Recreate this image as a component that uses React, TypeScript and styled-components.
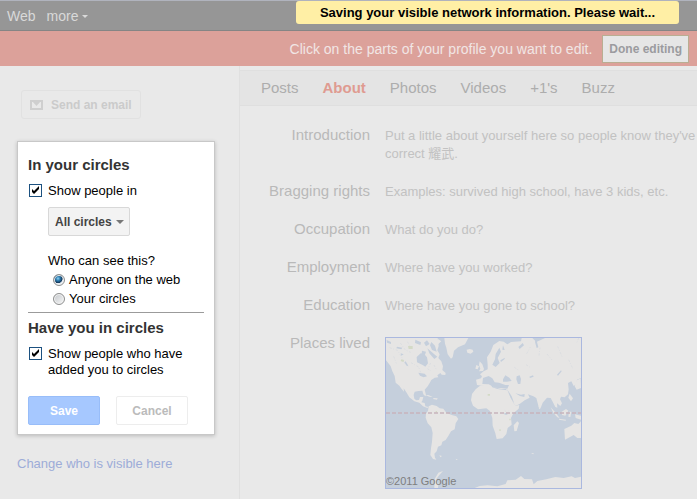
import React, { useState } from "react";
import styled, { createGlobalStyle } from "styled-components";

const GlobalStyle = createGlobalStyle`
  * { box-sizing: border-box; }
  body {
    margin: 0;
    background: #e9e9e9;
    color: #000;
    font: 13px/16px "Liberation Sans", Arial, "Noto Sans CJK SC", sans-serif;
    overflow: hidden;
  }
  button, input, select { font: inherit; margin: 0; }
  a { text-decoration: none; }
`;

const Page = styled.div`
  display: flex;
  flex-direction: column;
  min-height: 100vh;
`;

const TopBar = styled.nav`
  display: flex;
  align-items: center;
  gap: 11px;
  height: 31px;
  padding: 1px 7px 0;
  background: #969696;
  border-top: 1px solid #b0b3bd;
  border-bottom: 1px solid #858585;
`;

const TopLink = styled.a`
  display: flex;
  align-items: center;
  gap: 4px;
  color: #d9d9d9;
  font-size: 14px;
`;

const Toast = styled.div`
  position: absolute;
  top: 1px;
  right: 18px;
  width: 383px;
  padding: 4px 0 3px;
  border-radius: 3px;
  background: #ffefa5;
  font-weight: bold;
  text-align: center;
  white-space: nowrap;
`;

const EditBar = styled.div`
  display: flex;
  align-items: center;
  justify-content: flex-end;
  gap: 10px;
  height: 35px;
  padding-right: 8px;
  background: #dca19a;
  color: #f1e6e5;
  font-size: 14px;
  white-space: nowrap;
`;

const DoneButton = styled.button`
  height: 28px;
  padding: 0 6px;
  border: 1px solid #b9ae92;
  background: #e6e6e6;
  color: #9b9b9f;
  font-size: 12px;
  font-weight: bold;
`;

const Columns = styled.div`
  display: flex;
  flex: 1;
`;

const Sidebar = styled.aside`
  flex: 0 0 240px;
  padding: 24px 24px 0 17px;
  border-right: 1px solid #e0e0e0;
`;

const EmailButton = styled.button`
  display: flex;
  align-items: center;
  gap: 8px;
  height: 29px;
  margin-left: 4px;
  padding: 0 8px;
  border: 1px solid #e1e1e1;
  border-radius: 3px;
  background: transparent;
  color: #cbcbcb;
  font-size: 12px;
  font-weight: bold;
`;

const Card = styled.section`
  margin: 22px 0 21px;
  padding: 14px 10px 9px;
  border: 1px solid #c8c8c8;
  background: #fff;
  box-shadow: 0 1px 4px rgba(0, 0, 0, 0.2);
`;

const Heading = styled.h2`
  margin: 0;
  color: #333;
  font-size: 15px;
  line-height: 18px;
`;

const CheckLabel = styled.label`
  display: flex;
  align-items: flex-start;
  gap: 6px;
  margin-top: 9px;
  padding-left: 1px;
`;

const CheckFrame = styled.span`
  display: grid;
  flex: none;
  width: 13px;
  height: 13px;
  margin-top: 1px;
  & > * { grid-area: 1 / 1; }
  svg { pointer-events: none; }
  input:not(:checked) + svg { visibility: hidden; }
`;

const CheckInput = styled.input`
  appearance: none;
  width: 13px;
  height: 13px;
  border: 1px solid #1c5180;
  background: #fff;
`;

const Indented = styled.div`
  margin-left: 20px;
`;

const SelectFrame = styled.div`
  display: inline-grid;
  align-items: center;
  margin: 8px 0 16px;
  & > * { grid-area: 1 / 1; }
  svg { justify-self: end; margin-right: 6px; pointer-events: none; }
`;

const CircleSelect = styled.select`
  appearance: none;
  width: 82px;
  height: 29px;
  padding: 0 0 0 6px;
  border: 1px solid #d8d8d8;
  border-radius: 2px;
  background: #f3f3f3;
  color: #444;
  font-size: 12px;
  font-weight: bold;
`;

const Choices = styled.fieldset`
  margin: 0;
  padding: 0;
  border: 0;
  legend { padding: 0; line-height: 18px; }
`;

const RadioLabel = styled.label`
  display: flex;
  align-items: center;
  gap: 4px;
  padding-left: 5px;
  line-height: 19px;
`;

const RadioInput = styled.input`
  appearance: none;
  flex: none;
  width: 12px;
  height: 12px;
  border: 1px solid #8e8f8f;
  border-radius: 50%;
  background: linear-gradient(135deg, #c3c7cb, #f7f7f7);
  box-shadow: inset 0 0 0 1px #f4f4f4;
  &:checked {
    background: radial-gradient(circle at 40% 35%, #8bd3f5 0, #2b79ad 25%, #12375b 48%, #e4eaf0 56%);
  }
`;

const Divider = styled.hr`
  margin: 4px 0 6px;
  border: 0;
  border-top: 1px solid #9b9b9b;
`;

const Actions = styled.div`
  display: flex;
  gap: 16px;
  margin-top: 18px;
`;

const ActionButton = styled.button<{ $primary?: boolean }>`
  width: 72px;
  height: 29px;
  padding: 0;
  border: 1px solid ${(p) => (p.$primary ? "#98bdf9" : "#ededed")};
  border-radius: 2px;
  background: ${(p) => (p.$primary ? "#a6c8ff" : "#fff")};
  color: ${(p) => (p.$primary ? "#fff" : "#bbb")};
  font-size: 12px;
  font-weight: bold;
`;

const ChangeLink = styled.a`
  color: #9dacd8;
`;

const Main = styled.main`
  flex: 1;
  min-width: 0;
  padding-top: 4px;
`;

const Tabs = styled.nav`
  display: flex;
  align-items: center;
  height: 36px;
  padding-left: 21px;
  border-top: 1px solid #dfdfdf;
  border-bottom: 1px solid #dfdfdf;
  background: #e4e4e4;
`;

const Tab = styled.a<{ $active?: boolean }>`
  margin-right: 24px;
  color: ${(p) => (p.$active ? "#df9b91" : "#adadad")};
  font-size: 15px;
  font-weight: ${(p) => (p.$active ? "bold" : "normal")};
`;

const Fields = styled.dl`
  display: grid;
  grid-template-columns: 130px 1fr;
  align-items: baseline;
  column-gap: 15px;
  row-gap: 19px;
  margin: 20px 0 0;
  line-height: 18px;
`;

const FieldName = styled.dt`
  color: #b9b9b9;
  font-size: 15px;
  text-align: right;
`;

const FieldValue = styled.dd`
  margin: 0;
  color: #c2c2c2;
  white-space: nowrap;
`;

const MapValue = styled(FieldValue)`
  align-self: start;
`;

const MapFrame = styled.figure`
  display: grid;
  width: 197px;
  margin: 3px 0 0;
  border: 1px solid #aab8df;
  & > * { grid-area: 1 / 1; }
  svg { display: block; width: 100%; }
`;

const MapCredit = styled.figcaption`
  align-self: end;
  color: #7e7e7e;
  font-size: 11px;
  line-height: 13px;
`;

const Arrow = ({ color }: { color: string }) => (
  <svg width="8" height="4" viewBox="0 0 8 4" aria-hidden="true">
    <path d="M0 0h8L4 4z" fill={color} />
  </svg>
);

const Envelope = () => (
  <svg width="13" height="10" viewBox="0 0 13 10" aria-hidden="true">
    <path d="M1 1h11v8H1z" fill="none" stroke="#cfcfcf" strokeWidth="2" />
    <path d="M2 1h9L6.500 6z" fill="#cfcfcf" />
  </svg>
);

function CheckBox({ children }: { children: React.ReactNode }) {
  return (
    <CheckLabel>
      <CheckFrame>
        <CheckInput type="checkbox" defaultChecked />
        <svg width="13" height="13" viewBox="0 0 13 13" aria-hidden="true">
          <path d="M3 5v3l2 2 5-5V2L5 7z" fill="#000" />
        </svg>
      </CheckFrame>
      <span>{children}</span>
    </CheckLabel>
  );
}

const WorldMap = () => (
  <svg viewBox="33 39 585 450" role="img" aria-label="World map">
    <path fill="#c5cfdc" d="M33 39h585v450H33z" />
    <g fill="#e6e5e4">
      <path d="M33 39H188L191 63 187 76 194 88 190 99 199 109 204 124 202 135 212 144 211 150 200 149 196 144 187 151 190 157 179 158 169 165 164 174 158 184 149 194 153 210 151 214 145 208 142 197 131 198 119 200 116 210 118 221 124 226 132 225 135 216 145 216 142 227 139 232 149 234 151 244 160 246 157 249 144 244 133 233 118 229 103 217 94 202 86 190 87 200 80 192 73 182 62 173 59 153 52 139 47 124 38 112 33 106z" />
      <path d="M208 39H280L270 58 249 67 237 77 233 97 228 101 218 88 214 68 210 56z" />
      <path d="M275 74 284 72 293 74 295 80 287 86 277 83zM189 42 179 50 190 57 199 49zM160 210 173 216 163 215 151 210zM176 219 188 220 186 224 174 222z" />
      <path d="M161 244 171 239 185 243 194 250 205 251 214 263 230 270 244 274 250 282 242 295 239 313 228 319 220 333 212 345 202 350 199 361 189 365 185 379 178 386 180 398 184 404 174 402 166 390 168 370 171 350 173 324 169 307 158 295 152 278 153 266 159 257z" />
      <path d="M338 119 336 97 347 80 355 60 373 48 386 50 397 58 408 51 438 49 440 39H472L484 51 510 39H618V159L606 164 605 177 596 183 589 169 579 174 581 193 579 208 569 217 558 215 555 223 561 235 556 243 546 235 547 248 541 246 533 230 527 219 516 218 503 233 497 249 491 246 484 219 475 214 459 208 464 218 449 226 435 236 423 242 415 235 402 207 393 192 378 192 357 187 352 181 337 183 320 182 306 180 303 164 318 160 321 154 315 148 326 139 338 133z" />
      <path d="M315 182 337 179 347 179 352 187 367 192 384 194 397 196 407 216 415 234 423 242 433 240 431 251 415 265 408 279 410 299 398 309 394 327 383 340 365 342 361 325 353 302 352 279 345 258 334 250 309 253 294 242 288 226 291 207 302 193z" />
      <path d="M314 109 322 118 327 132 324 138 312 139 316 131 312 120zM304 120 312 124 308 133 301 131zM416 301 427 289 432 294 425 318 418 319zM606 166 617 160 618 189 605 194 599 184zM584 206 594 220 588 229 580 218zM491 243 497 250 492 253zM527 247 542 263 554 279 547 277 535 263zM560 260 573 252 580 257 571 272 561 270zM582 260 589 260 586 276 580 275zM600 268 618 272V284L602 279zM552 281 573 284 572 287 552 284zM568 312 589 302 598 294 610 297 618 289V339H607L596 330 585 336 570 344z" />
      <path d="M299 489 314 483 338 481 367 484 392 477 397 466 422 464 438 453 448 462 471 463 476 478 487 468 514 463 541 456 566 459 590 454 600 459 618 455V489zM178 489 179 462 190 443 204 438 193 450 184 462 190 475 189 489zM193 391 201 393 196 397zM242 401 249 404 244 405zM468 385 476 384 475 388z" />
    </g>
    <g fill="#c5cfdc">
      <path d="M125 96 137 85 147 86 156 97 159 115 151 125 143 120 126 112zM141 77 153 80 149 92 140 87zM147 53 156 46 164 57 153 64zM169 51 180 62 185 80 171 75 165 61zM157 70 177 87 187 95 178 102 164 86zM121 44 138 52 136 60 120 54zM35 45 48 51 48 57 36 53zM66 65 82 68 79 73 64 70zM77 85 86 88 79 92zM92 109 100 122 95 122 88 112zM130 143 149 146 156 154 146 157 135 152z" />
      <path d="M373 68 378 80 368 99 374 114 362 126 352 119 360 103 362 87zM376 106 390 98 388 103 378 111zM384 61 389 75 382 74zM324 159 341 153 352 160 359 172 372 173 391 180 402 180 397 191 382 190 360 188 341 178 322 177zM384 163 391 151 403 158 410 168 396 170 384 170zM425 154 434 151 438 162 436 177 429 177 424 163zM396 192 410 214 418 236 407 219zM421 205 438 209 449 207 448 216 435 213z" />
      <path d="M463 155l11-4 2 4-11 4zM546 149l12-13 2 3-11 13zM430 66l13-12 4 7-13 11zM483 39l7 28-5 2-5-18zM388 264h9v5h-8z" />
    </g>
    <g fill="none" stroke="#c5cfdc" strokeWidth="1">
      <path d="M44 68l23 8 12 18 8 19 13 11M76 54l15 21 16 7M108 113l23 13 6 16M56 94l8 21M97 50l15 25M167 114l-9 18 10 5M177 120l7 14M455 86l11-20M492 92l3-24M516 87l15 18M548 64l14 33M581 104l13 28M611 39l-6 15M418 127l12 8M453 119l11 7M389 256l7 7 7-8" strokeDasharray="7 4 3 5" />
    </g>
    <g fill="#d3dac6">
      <path d="M99 63h14v9h-12zM79 103l8 2-2 6-8-3zM338 207h7v5h-7zM182 258h4v5h-4zM373 313h4v5h-4zM403 281h4v5h-4z" />
    </g>
    <path d="M33 264H618" fill="none" stroke="#c8b4bc" strokeWidth="4" strokeDasharray="12 6" />
  </svg>
);

const tabs = ["Posts", "About", "Photos", "Videos", "+1's", "Buzz"];

const fields: [string, React.ReactNode][] = [
  ["Introduction", <>Put a little about yourself here so people know they've<br />correct 耀武.</>],
  ["Bragging rights", "Examples: survived high school, have 3 kids, etc."],
  ["Occupation", "What do you do?"],
  ["Employment", "Where have you worked?"],
  ["Education", "Where have you gone to school?"],
];

export default function App() {
  const [audience, setAudience] = useState("Anyone on the web");
  return (
    <Page>
      <GlobalStyle />
      <TopBar>
        <TopLink href="#web">Web</TopLink>
        <TopLink href="#more">
          more
          <svg width="6" height="3" viewBox="0 0 6 3" aria-hidden="true">
            <path d="M0 0h6L3 3z" fill="#d9d9d9" />
          </svg>
        </TopLink>
      </TopBar>
      <Toast role="status">Saving your visible network information. Please wait...</Toast>
      <EditBar>
        <span>Click on the parts of your profile you want to edit.</span>
        <DoneButton>Done editing</DoneButton>
      </EditBar>
      <Columns>
        <Sidebar>
          <EmailButton><Envelope />Send an email</EmailButton>
          <Card>
            <Heading>In your circles</Heading>
            <CheckBox>Show people in</CheckBox>
            <Indented>
              <SelectFrame>
                <CircleSelect aria-label="Circles shown">
                  <option>All circles</option>
                </CircleSelect>
                <Arrow color="#777" />
              </SelectFrame>
              <Choices>
                <legend>Who can see this?</legend>
                {["Anyone on the web", "Your circles"].map((name) => (
                  <RadioLabel key={name}>
                    <RadioInput
                      type="radio"
                      name="audience"
                      checked={audience === name}
                      onChange={() => setAudience(name)}
                    />
                    {name}
                  </RadioLabel>
                ))}
              </Choices>
            </Indented>
            <Divider />
            <Heading>Have you in circles</Heading>
            <CheckBox>Show people who have added you to circles</CheckBox>
            <Actions>
              <ActionButton $primary>Save</ActionButton>
              <ActionButton>Cancel</ActionButton>
            </Actions>
          </Card>
          <ChangeLink href="#visibility">Change who is visible here</ChangeLink>
        </Sidebar>
        <Main>
          <Tabs>
            {tabs.map((name) => (
              <Tab key={name} href={`#${name}`} $active={name === "About"}>{name}</Tab>
            ))}
          </Tabs>
          <Fields>
            {fields.map(([name, value]) => (
              <React.Fragment key={name}>
                <FieldName>{name}</FieldName>
                <FieldValue>{value}</FieldValue>
              </React.Fragment>
            ))}
            <FieldName>Places lived</FieldName>
            <MapValue>
              <MapFrame>
                <WorldMap />
                <MapCredit>©2011 Google</MapCredit>
              </MapFrame>
            </MapValue>
          </Fields>
        </Main>
      </Columns>
    </Page>
  );
}
